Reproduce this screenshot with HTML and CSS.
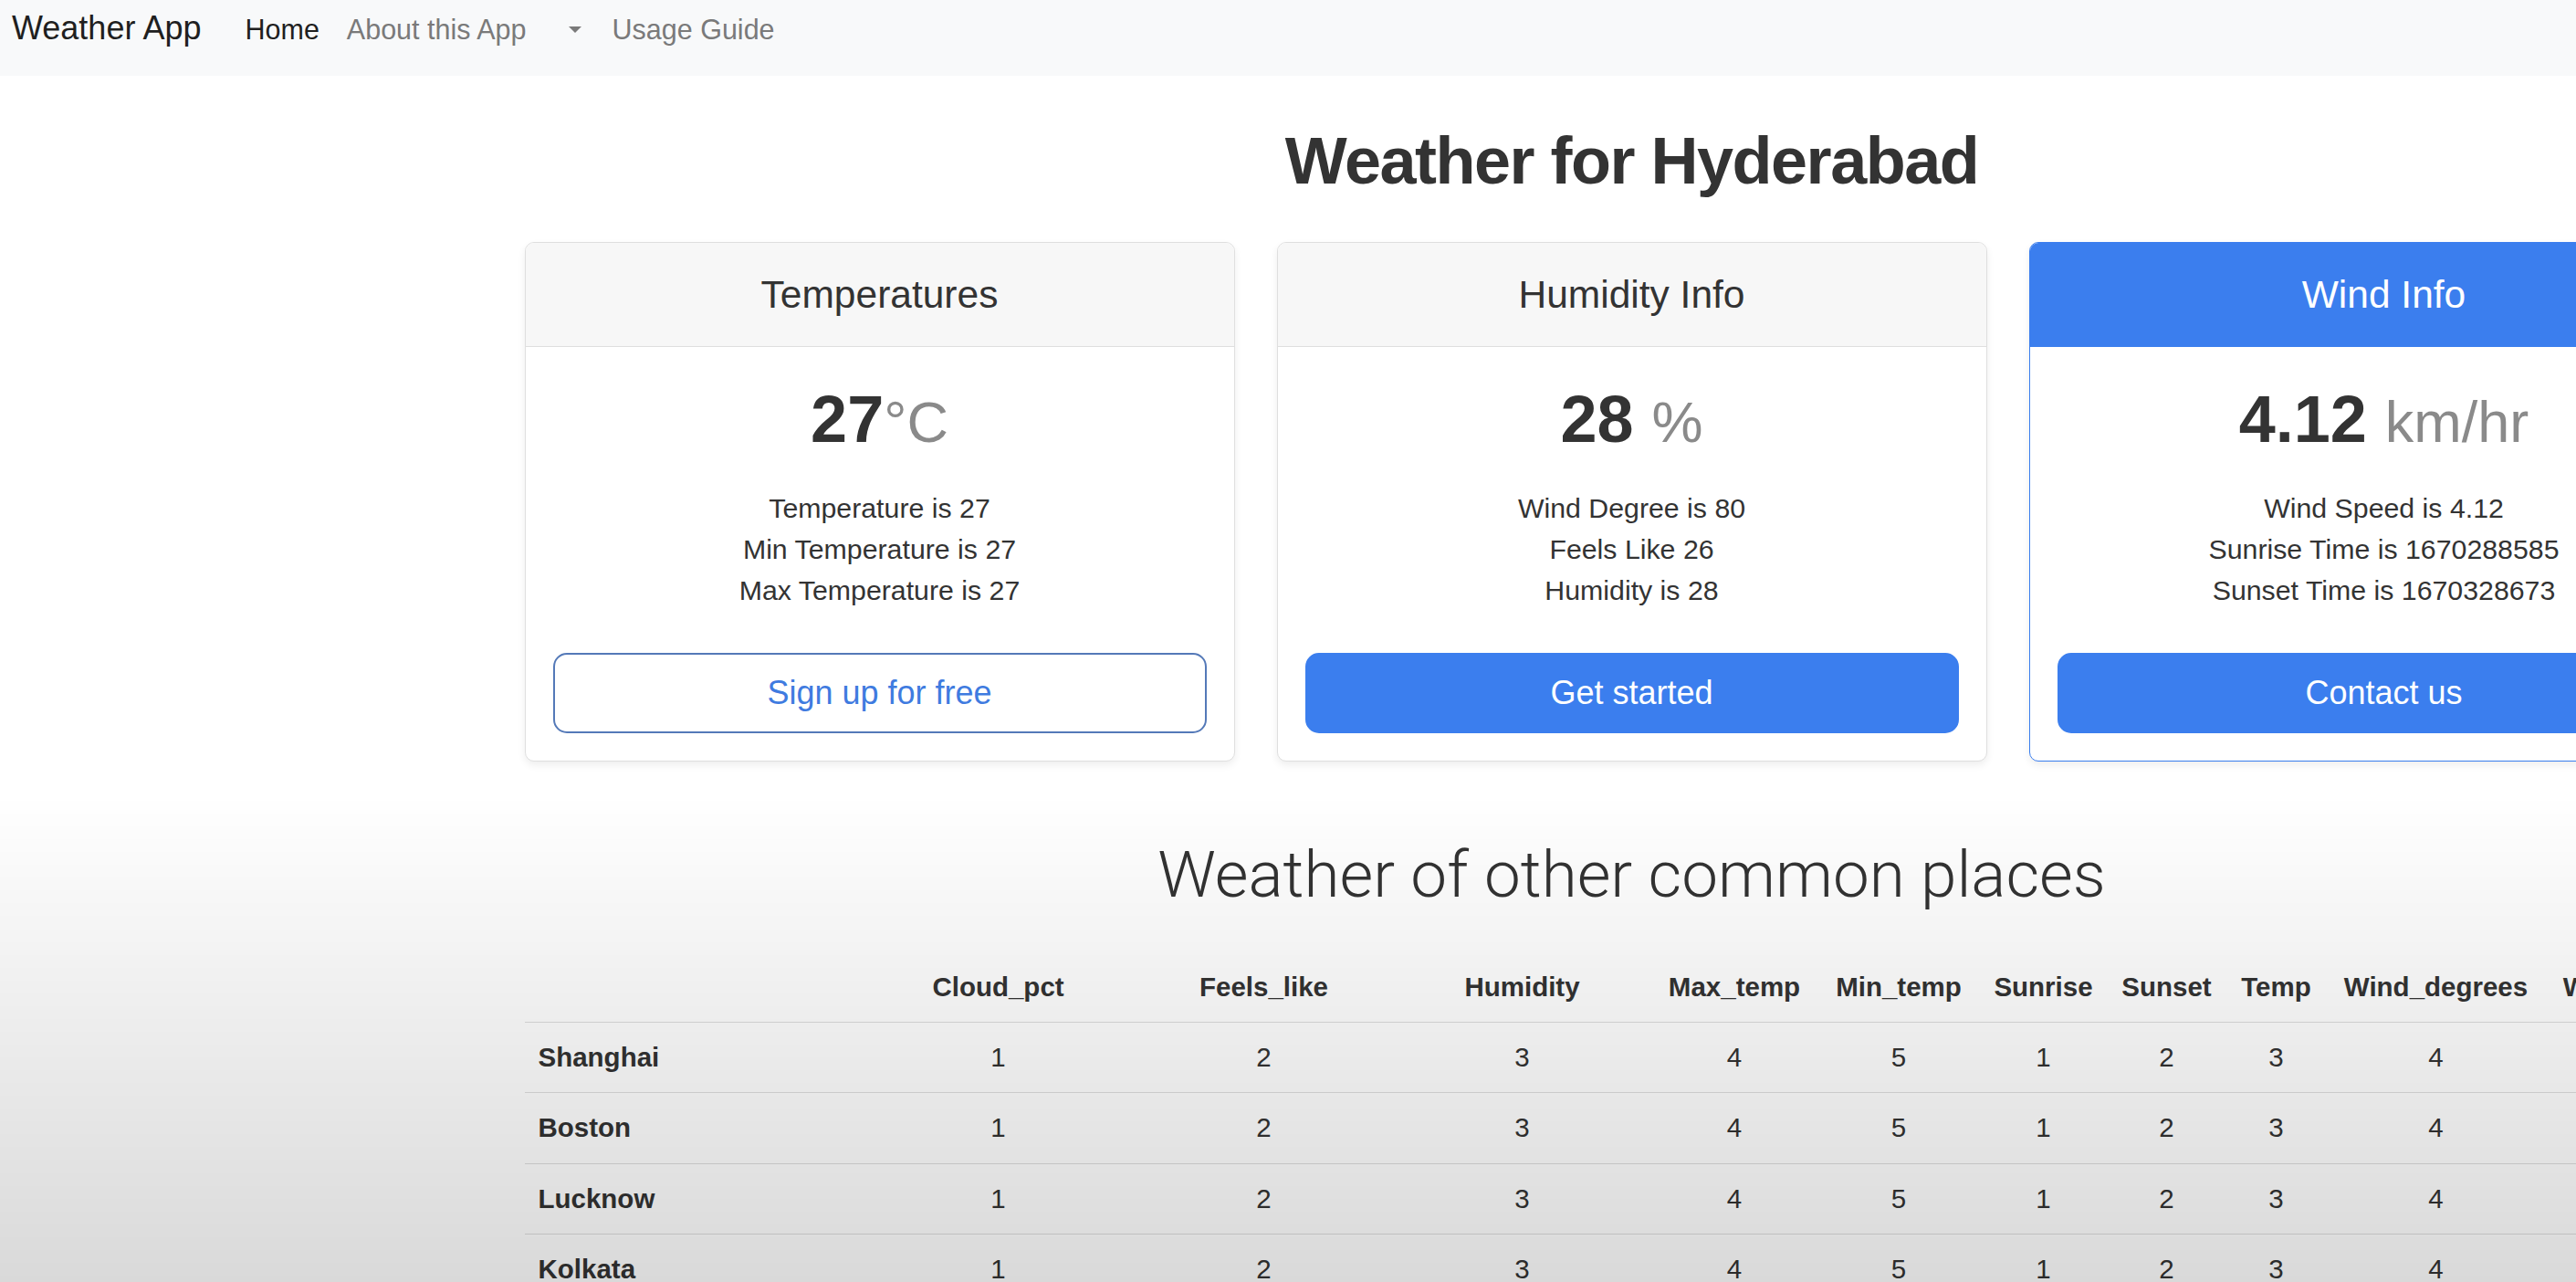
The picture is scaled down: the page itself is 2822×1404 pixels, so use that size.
FILE: index.html
```html
<!DOCTYPE html>
<html lang="en">
<head>
<meta charset="utf-8">
<title>Weather App</title>
<link rel="stylesheet" href="styles.css">
</head>
<body>
<nav class="navbar">
  <a class="brand">Weather App</a>
  <a class="nav-link active">Home</a>
  <a class="nav-link">About this App</a>
  <a class="nav-link toggle"><span class="caret"></span></a>
  <a class="nav-link">Usage Guide</a>
</nav>

<main class="container">
  <h1 class="page-title">Weather for Hyderabad</h1>

  <div class="cards">
    <div class="card">
      <div class="card-header"><h4>Temperatures</h4></div>
      <div class="card-body">
        <h1 class="value">27<span class="unit">°C</span></h1>
        <ul class="facts">
          <li>Temperature is 27</li>
          <li>Min Temperature is 27</li>
          <li>Max Temperature is 27</li>
        </ul>
        <button class="btn btn-outline">Sign up for free</button>
      </div>
    </div>
    <div class="card">
      <div class="card-header"><h4>Humidity Info</h4></div>
      <div class="card-body">
        <h1 class="value">28 <span class="unit">%</span></h1>
        <ul class="facts">
          <li>Wind Degree is 80</li>
          <li>Feels Like 26</li>
          <li>Humidity is 28</li>
        </ul>
        <button class="btn btn-primary">Get started</button>
      </div>
    </div>
    <div class="card card-primary">
      <div class="card-header"><h4>Wind Info</h4></div>
      <div class="card-body">
        <h1 class="value">4.12 <span class="unit">km/hr</span></h1>
        <ul class="facts">
          <li>Wind Speed is 4.12</li>
          <li>Sunrise Time is 1670288585</li>
          <li>Sunset Time is 1670328673</li>
        </ul>
        <button class="btn btn-primary">Contact us</button>
      </div>
    </div>
  </div>

  <h2 class="section-title">Weather of other common places</h2>

  <table class="table">
    <colgroup>
      <col class="c-city"><col class="c-cloud"><col class="c-feels"><col class="c-hum">
      <col class="c-max"><col class="c-min"><col class="c-rise"><col class="c-set">
      <col class="c-temp"><col class="c-wdeg"><col class="c-wspd">
    </colgroup>
    <thead>
      <tr>
        <th></th><th>Cloud_pct</th><th>Feels_like</th><th>Humidity</th><th>Max_temp</th><th>Min_temp</th><th>Sunrise</th><th>Sunset</th><th>Temp</th><th>Wind_degrees</th><th>Wind_speed</th>
      </tr>
    </thead>
    <tbody>
      <tr><th>Shanghai</th><td>1</td><td>2</td><td>3</td><td>4</td><td>5</td><td>1</td><td>2</td><td>3</td><td>4</td><td>5</td></tr>
      <tr><th>Boston</th><td>1</td><td>2</td><td>3</td><td>4</td><td>5</td><td>1</td><td>2</td><td>3</td><td>4</td><td>5</td></tr>
      <tr><th>Lucknow</th><td>1</td><td>2</td><td>3</td><td>4</td><td>5</td><td>1</td><td>2</td><td>3</td><td>4</td><td>5</td></tr>
      <tr><th>Kolkata</th><td>1</td><td>2</td><td>3</td><td>4</td><td>5</td><td>1</td><td>2</td><td>3</td><td>4</td><td>5</td></tr>
    </tbody>
  </table>
</main>

<div class="shade"></div>
</body>
</html>
```

FILE: styles.css
```css
* { box-sizing: border-box; }

html {
  overflow: hidden;
}

body {
  margin: 0;
  width: 3575px;
  font-family: "Liberation Sans", Arial, sans-serif;
  font-size: 30.3px;
  line-height: 1.5;
  color: #333;
  background: #fff;
}

/* Navbar */
.navbar {
  display: flex;
  align-items: baseline;
  height: 83px;
  padding: 4px 0 0 13px;
  background: #f8f9fa;
}

.brand {
  font-size: 36px;
  line-height: 1.5;
  color: #1f1f1f;
  margin-right: 33px;
}

.nav-link {
  padding: 0 15px;
  font-size: 30.5px;
  color: #7a7a7a;
}

.nav-link.active {
  color: #1f1f1f;
}

.toggle {
  padding: 0 19px 0 31px;
}

.caret {
  display: inline-block;
  vertical-align: 7px;
  border-top: 7px solid #7a7a7a;
  border-left: 7px solid transparent;
  border-right: 7px solid transparent;
}

/* Main */
.container {
  width: 2426px;
  margin: 0 auto;
}

.page-title {
  margin: 50px 0 46px;
  font-size: 72px;
  font-weight: 700;
  letter-spacing: -1.5px;
  line-height: 1.2;
  text-align: center;
  color: #333;
}

.cards {
  display: flex;
  gap: 46px;
}

.card {
  width: 778px;
  border: 1px solid #dfdfdf;
  border-radius: 10px;
  overflow: hidden;
  background: #fff;
  text-align: center;
  box-shadow: 0 4px 8px rgba(0, 0, 0, 0.07);
}

.card-header {
  padding: 31px 30px 31px;
  background: #f7f7f7;
  border-bottom: 1px solid #dfdfdf;
}

.card-header h4 {
  margin: 0;
  font-size: 42.5px;
  font-weight: 400;
  line-height: 1.2;
  color: #333;
}

.card-primary {
  border-color: #3b7eee;
}

.card-primary .card-header {
  background: #3b7eee;
  border-bottom-color: #3b7eee;
}

.card-primary .card-header h4 {
  color: #fff;
}

.card-body {
  padding: 36px 30px 30px;
}

.value {
  margin: 0 0 14px;
  font-size: 72px;
  font-weight: 700;
  line-height: 1.2;
  color: #333;
}

.unit {
  font-size: 63px;
  font-weight: 400;
  color: #8a8a8a;
}

.facts {
  list-style: none;
  margin: 31px 0 46px;
  padding: 0;
  line-height: 45px;
}

.btn {
  display: block;
  width: 100%;
  padding: 15px;
  font-family: inherit;
  font-size: 36px;
  line-height: 54px;
  border: 2px solid;
  border-radius: 15px;
  cursor: pointer;
}

.btn-outline {
  background: #fff;
  border-color: #5479b8;
  color: #3f7be0;
}

.btn-primary {
  background: #3b7eee;
  border-color: #3b7eee;
  color: #fff;
}

.section-title {
  margin: 81px 0 43px;
  font-family: Roboto, "Liberation Sans", sans-serif;
  font-size: 71px;
  font-weight: 300;
  line-height: 1.2;
  text-align: center;
  color: #333;
}

/* Table */
.table {
  width: 2426px;
  table-layout: fixed;
  border-collapse: collapse;
  font-size: 29.5px;
  line-height: 44.25px;
}

.table th,
.table td {
  padding: 16px 15px;
  border-bottom: 1px solid #dedede;
  text-align: center;
  white-space: nowrap;
}

.table th {
  font-weight: 700;
}

.table tbody th {
  text-align: left;
}

.c-city { width: 370px; }
.c-cloud { width: 298px; }
.c-feels { width: 284px; }
.c-hum { width: 282px; }
.c-max { width: 183px; }
.c-min { width: 177px; }
.c-rise { width: 140px; }
.c-set { width: 130px; }
.c-temp { width: 110px; }
.c-wdeg { width: 240px; }
.c-wspd { width: 212px; }

/* bottom shading over the page */
.shade {
  position: fixed;
  left: 0;
  right: 0;
  bottom: 0;
  height: 534px;
  background: linear-gradient(to bottom, rgba(0, 0, 0, 0), rgba(0, 0, 0, 0.15));
  pointer-events: none;
}
```
